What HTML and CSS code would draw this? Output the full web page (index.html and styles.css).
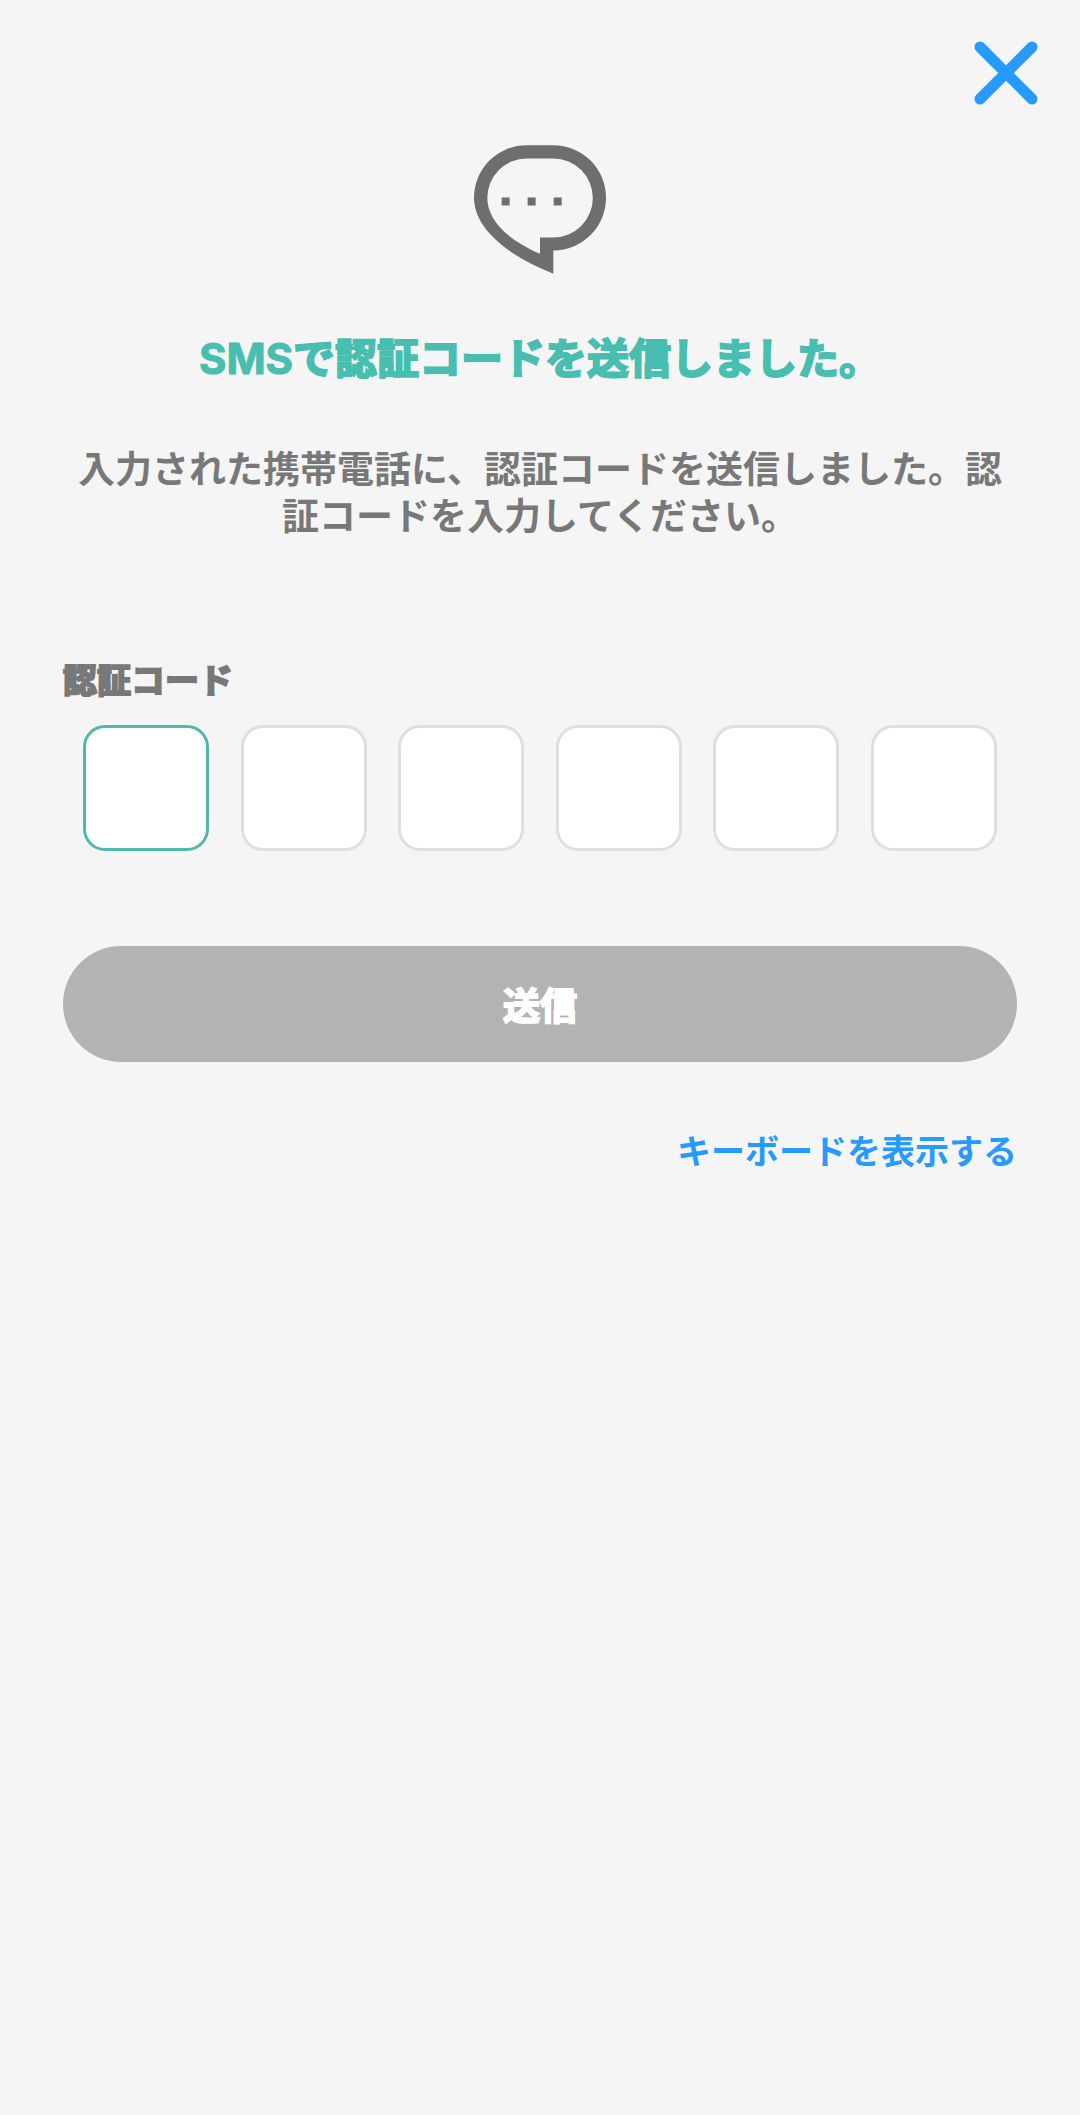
FILE: index.html
```
<!DOCTYPE html>
<html lang="ja">
	<head>
		<meta charset="utf-8">
		<meta name="viewport" content="width=device-width, initial-scale=1">
		<title>認証コード</title>
		<link rel="stylesheet" href="styles.css">
	</head>
	<body>
		<header class="top">
			<button class="close" type="button" aria-label="閉じる">
				<svg viewBox="0 0 64 64" width="64" height="64">
					<path d="M6 6L58 58M58 6L6 58" fill="none" stroke="#269aff" stroke-width="11" stroke-linecap="round"/>
				</svg>
			</button>
		</header>
		<main class="content">
			<svg class="bubble" viewBox="0 0 396 386" width="132" height="129" aria-hidden="true">
				<path fill="#6e6e6e" fill-rule="evenodd" d="M158 0H238A158 158 0 0 1 238 316V386C80 322 0 240 0 158A158 158 0 0 1 158 0ZM158 40A118 118 0 0 0 40 158C40 220 90 278 198 326V277H238A118 118 0 0 0 238 40Z"/>
				<path fill="#6e6e6e" d="M83 157h24v24h-24zM161 157h24v24h-24zM239 157h24v24h-24z"/>
			</svg>
			<h1 class="title"><span class="latin">SMS</span>で認証コードを送信しました。</h1>
			<p class="message">入力された携帯電話に、認証コードを送信しました。認証コードを入力してください。</p>
			<form class="form">
				<label class="label" for="code1">認証コード</label>
				<div class="codes">
					<input class="code active" id="code1" type="text" inputmode="numeric" maxlength="1">
					<input class="code" type="text" inputmode="numeric" maxlength="1" aria-label="2桁目">
					<input class="code" type="text" inputmode="numeric" maxlength="1" aria-label="3桁目">
					<input class="code" type="text" inputmode="numeric" maxlength="1" aria-label="4桁目">
					<input class="code" type="text" inputmode="numeric" maxlength="1" aria-label="5桁目">
					<input class="code" type="text" inputmode="numeric" maxlength="1" aria-label="6桁目">
				</div>
				<button class="submit" type="submit" disabled>送信</button>
			</form>
			<a class="keyboard" href="#code1">キーボードを表示する</a>
		</main>
	</body>
</html>
```
FILE: styles.css
```
* {
	box-sizing: border-box;
}
body {
	margin: 0;
	background: #f5f5f5;
	color: #787878;
	font-family: Inter, "Noto Sans CJK JP", sans-serif;
	font-weight: 700;
}
.top {
	display: flex;
	justify-content: flex-end;
	padding: 41px 42px 0 0;
}
.close {
	display: flex;
	padding: 0;
	border: none;
	background: none;
	cursor: pointer;
}
.content {
	display: flex;
	flex-direction: column;
	align-items: center;
	padding: 40px 63px;
}
.title {
	margin: 53px 0 0;
	color: #48beb0;
	font-size: 42px;
	line-height: 64px;
	-webkit-text-stroke: 2px;
}
.title .latin {
	-webkit-text-stroke: 1px;
}
.message {
	margin: 55px 0 0;
	font-size: 37px;
	line-height: 47px;
	text-align: center;
}
.form {
	display: flex;
	flex-direction: column;
	align-self: stretch;
	margin-top: 117px;
}
.label {
	font-size: 34px;
	line-height: 48px;
	-webkit-text-stroke: 2px;
}
.codes {
	display: flex;
	justify-content: space-between;
	padding: 0 20px;
	margin-top: 20px;
}
.code {
	width: 126px;
	height: 126px;
	padding: 0;
	border: 3px solid #dfdfdf;
	border-radius: 22px;
	background: #fff;
	color: #787878;
	font: inherit;
	font-size: 42px;
	text-align: center;
	outline: none;
}
.code.active, .code:focus {
	border-color: #52b8ab;
}
.submit {
	height: 116px;
	margin-top: 95px;
	border: none;
	border-radius: 58px;
	background: #b3b3b3;
	color: #fff;
	font: inherit;
	font-size: 37px;
	-webkit-text-stroke: 2px;
}
.keyboard {
	align-self: flex-end;
	margin-top: 66px;
	color: #269aff;
	font-size: 34px;
	line-height: 48px;
	text-decoration: none;
}
```
